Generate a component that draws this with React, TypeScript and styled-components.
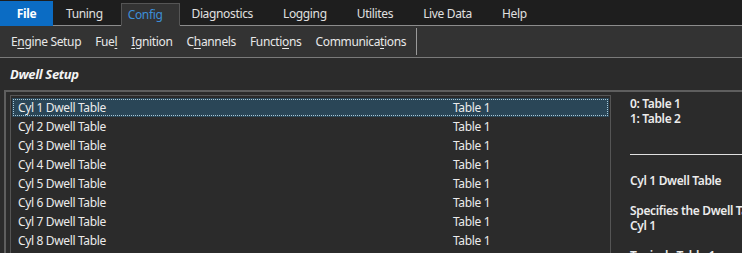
import styled, { createGlobalStyle } from 'styled-components';

const GlobalStyle = createGlobalStyle`
    html, body {
        margin: 0;
        padding: 0;
        background: #2b2b2b;
        overflow: hidden;
    }
    body {
        font-family: "Noto Sans", "Open Sans", sans-serif;
        font-size: 12px;
        letter-spacing: -0.35px;
        color: #e6e6e6;
    }
`;

const menuTabs = ['Tuning', 'Config', 'Diagnostics', 'Logging', 'Utilites', 'Live Data', 'Help'];

// access key letter is underlined, like a windows form menu
const toolItems: [string, number][] = [
    ['Engine Setup', 1],
    ['Fuel', 3],
    ['Ignition', 0],
    ['Channels', 1],
    ['Functions', 6],
    ['Communications', 9],
];

const cylinders = Array.from({ length: 8 }).map((_, i) => ({
    name: `Cyl ${i + 1} Dwell Table`,
    value: 'Table 1',
}));

const Page = styled.div`
    width: 742px;
    height: 253px;
    display: flex;
    flex-direction: column;
    overflow: hidden;
    & > * {
        flex-shrink: 0;
    }
`;

const MenuBar = styled.div`
    height: 25px;
    display: flex;
    align-items: flex-end;
    background: #1e1e1e;
    border-bottom: 1px solid #8c8c8c;
`;

const FileTab = styled.div`
    width: 53px;
    height: 25px;
    margin-bottom: -1px;
    display: flex;
    align-items: center;
    justify-content: center;
    background: #0b6cc4;
    color: #fff;
    font-weight: bold;
`;

const MenuTab = styled.div<{ $active?: boolean }>`
    height: ${({ $active }) => ($active ? '23px' : '25px')};
    margin-bottom: -1px;
    display: flex;
    align-items: center;
    padding: ${({ $active }) => ($active ? '0 17px 0 6px' : '0 15px')};
    box-sizing: border-box;
    color: ${({ $active }) => ($active ? '#3d8fd8' : '#e0e0e0')};
    background: ${({ $active }) => ($active ? '#333333' : 'transparent')};
    border: ${({ $active }) => ($active ? '1px solid #555' : 'none')};
    border-bottom: ${({ $active }) => ($active ? '1px solid #333333' : 'none')};
    &:nth-child(2) {
        padding: 0 18px 0 13px;
    }
    &:nth-child(4) {
        padding-left: 11px;
    }
`;

const Toolbar = styled.div`
    height: 31px;
    display: flex;
    align-items: center;
    padding-left: 11px;
    gap: 14px;
    background: #333333;
    border-bottom: 1px solid #7a7a7a;
`;

const ToolItem = styled.div`
    color: #e8e8e8;
    white-space: nowrap;
    u {
        text-decoration-thickness: 1px;
        text-underline-offset: 2px;
    }
`;

const ToolSeparator = styled.div`
    width: 1px;
    height: 27px;
    margin-left: -4px;
    background: #9a9a9a;
`;

const Title = styled.div`
    height: 32px;
    display: flex;
    align-items: center;
    padding-left: 10px;
    font-weight: bold;
    font-style: italic;
    font-size: 13px;
    color: #f4f4f4;
`;

const Frame = styled.div`
    flex: 1;
    margin-left: 4px;
    display: flex;
    padding: 3px 0 0 4px;
    border-top: 2px solid #5e5e5e;
    border-left: 2px solid #5e5e5e;
`;

const ListBox = styled.div`
    width: 597px;
    border: 1px solid #555555;
    border-bottom: none;
    padding: 2px 1px 0;
    flex-shrink: 0;
`;

const Row = styled.div<{ $selected?: boolean }>`
    height: 19px;
    display: grid;
    grid-template-columns: 435px 1fr;
    align-items: center;
    padding-left: 6px;
    box-sizing: border-box;
    background: ${({ $selected }) => ($selected ? '#2a4657' : 'transparent')};
    outline: ${({ $selected }) => ($selected ? '1px dotted #a8c8d8' : 'none')};
    outline-offset: -2px;
    color: #ececec;
    white-space: nowrap;
`;

const HelpPanel = styled.div`
    flex: 1;
    padding: 1px 0 0 19px;
    font-weight: 600;
    color: #ececec;
    line-height: 15px;
    white-space: nowrap;
    overflow: hidden;
`;

const Divider = styled.div`
    height: 1px;
    background: #e0e0e0;
    margin: 28px 0 18px;
`;

const Para = styled.div`
    margin-bottom: 15px;
`;

export default function App() {
    return (
        <Page>
            <GlobalStyle />
            <MenuBar>
                <FileTab>File</FileTab>
                {menuTabs.map((t) => (
                    <MenuTab key={t} $active={t === 'Config'}>{t}</MenuTab>
                ))}
            </MenuBar>
            <Toolbar>
                {toolItems.map(([label, k]) => (
                    <ToolItem key={label}>
                        {label.slice(0, k)}
                        <u>{label[k]}</u>
                        {label.slice(k + 1)}
                    </ToolItem>
                ))}
                <ToolSeparator />
            </Toolbar>
            <Title>Dwell Setup</Title>
            <Frame>
                <ListBox>
                    {cylinders.map((c, i) => (
                        <Row key={c.name} $selected={i === 0}>
                            <span>{c.name}</span>
                            <span>{c.value}</span>
                        </Row>
                    ))}
                </ListBox>
                <HelpPanel>
                    <div>0: Table 1</div>
                    <div>1: Table 2</div>
                    <Divider />
                    <Para>Cyl 1 Dwell Table</Para>
                    <Para>
                        Specifies the Dwell Table used for
                        <br />
                        Cyl 1
                    </Para>
                    <Para>Typical : Table 1</Para>
                </HelpPanel>
            </Frame>
        </Page>
    );
}
